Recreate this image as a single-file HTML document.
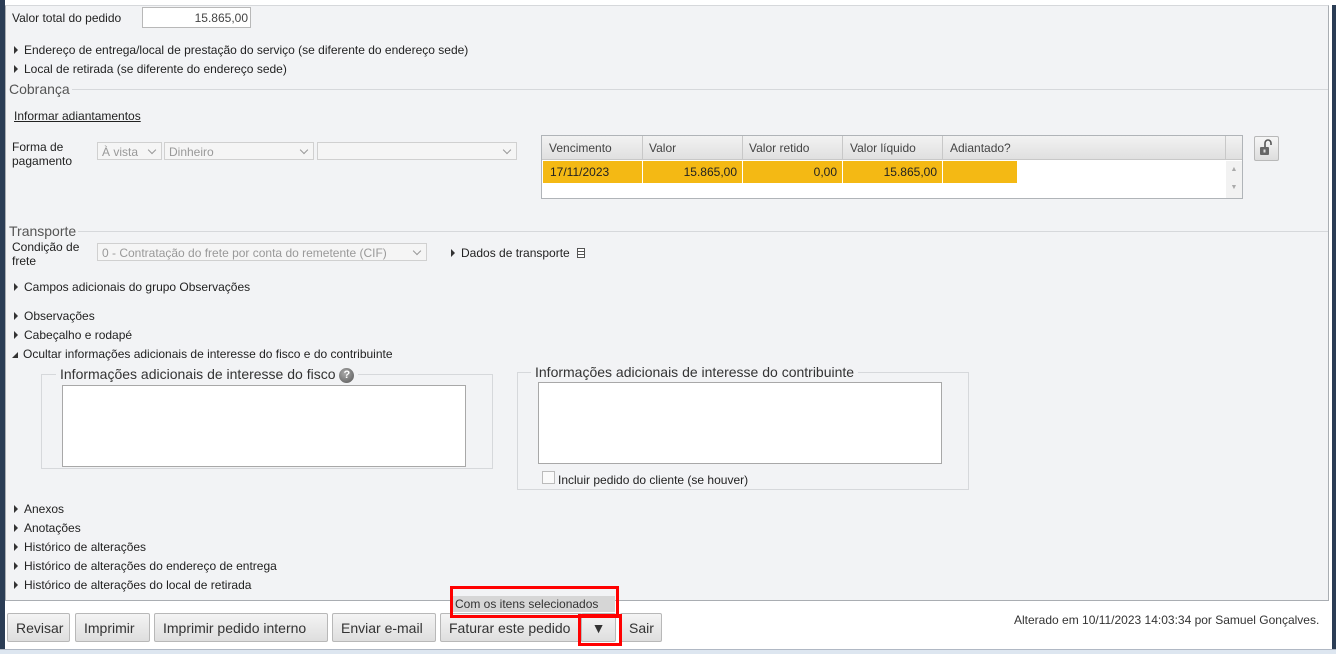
<!DOCTYPE html>
<html><head><meta charset="utf-8"><style>
*{box-sizing:border-box;margin:0;padding:0}
body{width:1336px;height:654px;overflow:hidden;background:#fff;font-family:"Liberation Sans",sans-serif;font-size:12px;color:#222;position:relative}
.a{position:absolute;white-space:nowrap}
.tri{display:inline-block;width:0;height:0;border-left:4px solid #333;border-top:4px solid transparent;border-bottom:4px solid transparent;margin-right:6px;vertical-align:0}
.sel{position:absolute;height:18px;border:1px solid #d0d0d0;background:#f5f5f5;color:#999;font-size:12px;padding:2px 4px}
.sel:after{content:"";position:absolute;right:6px;top:4px;width:5px;height:5px;border-right:1.5px solid #999;border-bottom:1.5px solid #999;transform:rotate(45deg)}
.btn{position:absolute;top:613px;height:29px;border:1px solid #b8b8b8;border-radius:2px;background:linear-gradient(#f4f4f4,#dedede);font-size:14px;color:#333;padding:6px 8px}
.hr{position:absolute;height:1px;background:#d6d8db}
</style></head><body>
<div class="a" style="left:0;top:0;width:5px;height:654px;background:#2b3d55"></div>
<div class="a" style="left:1332px;top:5px;width:4px;height:645px;background:#2b3d55"></div>
<div class="a" style="left:5px;top:5px;width:1324px;height:596px;background:#f2f3f5;border:1px solid #a9adb2;border-top:1px solid #d6d8db"></div>
<div class="a" style="left:0;top:649px;width:1336px;height:5px;background:#dde6f0;border-top:1px solid #b0b8c4"></div>

<div class="a" style="left:12px;top:11px">Valor total do pedido</div>
<div class="a" style="left:142px;top:7px;width:109px;height:21px;background:#fff;border:1px solid #b8b8b8;text-align:right;padding:3px 2px;color:#444">15.865,00</div>
<div class="a" style="left:14px;top:43px"><span class="tri"></span>Endereço de entrega/local de prestação do serviço (se diferente do endereço sede)</div>
<div class="a" style="left:14px;top:62px"><span class="tri"></span>Local de retirada (se diferente do endereço sede)</div>
<div class="a" style="left:9px;top:81px;font-size:14px;color:#555">Cobrança</div>
<div class="hr" style="left:72px;top:89px;width:1256px"></div>
<div class="a" style="left:14px;top:109px;text-decoration:underline">Informar adiantamentos</div>
<div class="a" style="left:12px;top:140px;line-height:14px">Forma de<br>pagamento</div>
<div class="sel" style="left:97px;top:142px;width:65px">À vista</div>
<div class="sel" style="left:164px;top:142px;width:150px">Dinheiro</div>
<div class="sel" style="left:317px;top:142px;width:200px"></div>

<div class="a" style="left:541px;top:135px;width:702px;height:64px;border:1px solid #b0b4b8;background:#fff"></div>
<div class="a" style="left:542px;top:136px;width:700px;height:24px;background:linear-gradient(#f2f2f2,#e0e0e0);border-bottom:1px solid #c8c8c8"></div>
<div class="a" style="left:549px;top:141px;color:#444">Vencimento</div>
<div class="a" style="left:649px;top:141px;color:#444">Valor</div>
<div class="a" style="left:749px;top:141px;color:#444">Valor retido</div>
<div class="a" style="left:850px;top:141px;color:#444">Valor líquido</div>
<div class="a" style="left:950px;top:141px;color:#444">Adiantado?</div>
<div class="a" style="left:642px;top:136px;width:1px;height:24px;background:#c8c8c8"></div>
<div class="a" style="left:742px;top:136px;width:1px;height:24px;background:#c8c8c8"></div>
<div class="a" style="left:842px;top:136px;width:1px;height:24px;background:#c8c8c8"></div>
<div class="a" style="left:942px;top:136px;width:1px;height:24px;background:#c8c8c8"></div>
<div class="a" style="left:1225px;top:136px;width:1px;height:24px;background:#c8c8c8"></div>
<div class="a" style="left:543px;top:161px;width:474px;height:22px;background:#f4b914"></div>
<div class="a" style="left:642px;top:161px;width:1px;height:22px;background:#fff"></div>
<div class="a" style="left:742px;top:161px;width:1px;height:22px;background:#fff"></div>
<div class="a" style="left:842px;top:161px;width:1px;height:22px;background:#fff"></div>
<div class="a" style="left:942px;top:161px;width:1px;height:22px;background:#fff"></div>
<div class="a" style="left:550px;top:165px">17/11/2023</div>
<div class="a" style="left:642px;top:165px;width:95px;text-align:right">15.865,00</div>
<div class="a" style="left:742px;top:165px;width:95px;text-align:right">0,00</div>
<div class="a" style="left:842px;top:165px;width:95px;text-align:right">15.865,00</div>
<div class="a" style="left:1226px;top:161px;width:16px;height:37px;background:#f2f2f2;color:#aaa;font-size:7px;text-align:center;line-height:18px">▲<br>▼</div>
<div class="a" style="left:1254px;top:136px;width:25px;height:25px;border:1px solid #b8b8b8;border-radius:2px;background:linear-gradient(#f6f6f6,#ddd)">
<svg width="23" height="23" viewBox="0 0 23 23"><path d="M10 10V6a3 3 0 0 1 6 0v2" fill="none" stroke="#555" stroke-width="1.6"/><rect x="5" y="10" width="9" height="8" rx="1" fill="#666"/><rect x="8.5" y="12.5" width="2" height="3" fill="#ddd"/></svg></div>

<div class="a" style="left:9px;top:223px;font-size:14px;color:#555">Transporte</div>
<div class="hr" style="left:78px;top:231px;width:1250px"></div>
<div class="a" style="left:12px;top:240px;line-height:14px">Condição de<br>frete</div>
<div class="sel" style="left:97px;top:243px;width:330px">0 - Contratação do frete por conta do remetente (CIF)</div>
<div class="a" style="left:451px;top:246px"><span class="tri"></span>Dados de transporte <span style="display:inline-block;width:8px;height:10px;border:1px solid #555;margin-left:4px;vertical-align:-1px;background:repeating-linear-gradient(#fff 0 2px,#555 2px 3px)"></span></div>
<div class="a" style="left:14px;top:280px"><span class="tri"></span>Campos adicionais do grupo Observações</div>
<div class="a" style="left:14px;top:309px"><span class="tri"></span>Observações</div>
<div class="a" style="left:14px;top:328px"><span class="tri"></span>Cabeçalho e rodapé</div>
<div class="a" style="left:12px;top:347px"><span style="display:inline-block;width:0;height:0;border-right:6px solid #333;border-top:6px solid transparent;margin-right:5px"></span>Ocultar informações adicionais de interesse do fisco e do contribuinte</div>

<div class="a" style="left:41px;top:374px;width:452px;height:95px;border:1px solid #d6d8db"></div>
<div class="a" style="left:56px;top:366px;background:#f2f3f5;padding:0 4px;font-size:14px;color:#333">Informações adicionais de interesse do fisco <span style="display:inline-block;width:15px;height:15px;border-radius:50%;background:radial-gradient(circle at 40% 35%,#aaa,#555);color:#fff;font-size:11px;text-align:center;line-height:15px;font-weight:bold;vertical-align:1px">?</span></div>
<div class="a" style="left:62px;top:385px;width:404px;height:82px;background:#fff;border:1px solid #a8a8a8"></div>
<div class="a" style="left:517px;top:372px;width:452px;height:118px;border:1px solid #d6d8db"></div>
<div class="a" style="left:531px;top:364px;background:#f2f3f5;padding:0 4px;font-size:14px;color:#333">Informações adicionais de interesse do contribuinte</div>
<div class="a" style="left:538px;top:382px;width:404px;height:82px;background:#fff;border:1px solid #a8a8a8"></div>
<div class="a" style="left:542px;top:471px;width:13px;height:13px;border:1px solid #bbb;background:#fafafa"></div>
<div class="a" style="left:558px;top:473px">Incluir pedido do cliente (se houver)</div>

<div class="a" style="left:14px;top:502px"><span class="tri"></span>Anexos</div>
<div class="a" style="left:14px;top:521px"><span class="tri"></span>Anotações</div>
<div class="a" style="left:14px;top:540px"><span class="tri"></span>Histórico de alterações</div>
<div class="a" style="left:14px;top:559px"><span class="tri"></span>Histórico de alterações do endereço de entrega</div>
<div class="a" style="left:14px;top:578px"><span class="tri"></span>Histórico de alterações do local de retirada</div>

<div class="btn" style="left:7px;width:63px">Revisar</div>
<div class="btn" style="left:75px;width:75px">Imprimir</div>
<div class="btn" style="left:154px;width:174px">Imprimir pedido interno</div>
<div class="btn" style="left:332px;width:104px">Enviar e-mail</div>
<div class="btn" style="left:440px;width:142px">Faturar este pedido</div>
<div class="btn" style="left:581px;width:35px;text-align:center;padding:6px 0">▼</div>
<div class="btn" style="left:620px;width:42px">Sair</div>
<div class="a" style="left:452px;top:596px;width:163px;height:16px;background:#d6d6d6;font-size:12px;padding:1px 3px;color:#333">Com os itens selecionados</div>
<div class="a" style="left:450px;top:586px;width:169px;height:32px;border:3px solid #f00"></div>
<div class="a" style="left:578px;top:614px;width:44px;height:32px;border:3px solid #f00"></div>
<div class="a" style="left:1014px;top:613px;color:#333">Alterado em 10/11/2023 14:03:34 por Samuel Gonçalves.</div>
</body></html>
